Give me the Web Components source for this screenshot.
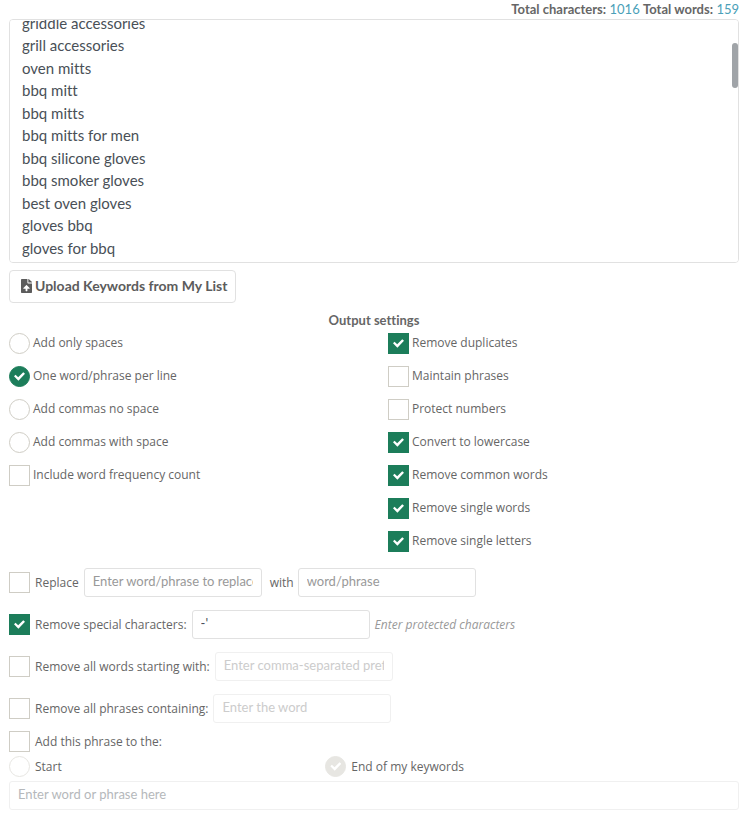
<!DOCTYPE html>
<html lang="en">
<head>
<meta charset="UTF-8">
<meta name="viewport" content="width=device-width, initial-scale=1">
<title>Keyword tool</title>
<style>
    body {
        margin: 0;
        padding: 0 11px 0 9px;
        background: #fff;
        color: #666;
        font: 12px/18px "Open Sans", sans-serif;
        font-variant-ligatures: none;
    }
</style>
</head>
<body>
<keyword-tool></keyword-tool>

<script>
// Styles shared by every tick box and radio
const tickStyle = `
    input[type="checkbox"], input[type="radio"] {
        appearance: none;
        flex: none;
        display: grid;
        place-content: center;
        box-sizing: border-box;
        width: 21px;
        height: 21px;
        margin: 0;
        border: 1px solid #cfcdc5;
        background: #fff;
    }

    input[type="radio"] {
        border-radius: 50%;
    }

    input:checked {
        border-color: #1c7d5a;
        background: #1c7d5a;
    }

    input:checked::before {
        content: "";
        width: 11px;
        height: 9px;
        background: #fff;
        clip-path: polygon(0 48%, 14% 30%, 38% 58%, 84% 4%, 100% 20%, 40% 96%);
    }

    input[type="radio"]:disabled {
        border-color: #e7e6e2;
    }

    input[type="radio"]:disabled:checked {
        background: #e7e6e2;
    }
`;

// Totals over the list
class TextTotals extends HTMLElement {
    constructor() {
        super();
        this.attachShadow({ mode: "open" });
        this.shadowRoot.innerHTML = `
            <style>
                :host {
                    display: block;
                    text-align: right;
                    font-family: Lato, sans-serif;
                    font-size: 13px;
                    line-height: 19px;
                }

                span {
                    color: #4a9fb8;
                }
            </style>
            <b>Total characters:</b> <span>${this.getAttribute("characters")}</span>
            <b>Total words:</b> <span>${this.getAttribute("words")}</span>
        `;
    }
}
customElements.define("text-totals", TextTotals);

// Scrolling list of keywords, with its own thumb over the right edge
class KeywordList extends HTMLElement {
    constructor() {
        super();
        this.attachShadow({ mode: "open" });

        this.keywords = [
            "griddle accessories",
            "grill accessories",
            "oven mitts",
            "bbq mitt",
            "bbq mitts",
            "bbq mitts for men",
            "bbq silicone gloves",
            "bbq smoker gloves",
            "best oven gloves",
            "gloves bbq",
            "gloves for bbq"
        ];

        this.shadowRoot.innerHTML = `
            <style>
                :host {
                    display: block;
                    position: relative;
                }

                textarea {
                    display: block;
                    box-sizing: border-box;
                    width: 100%;
                    height: 244px;
                    padding: 6px 12px;
                    border: 1px solid #e1e1e1;
                    border-radius: 4px;
                    outline: none;
                    resize: none;
                    color: #495057;
                    font: 15px/1.5 Lato, sans-serif;
                    font-variant-ligatures: none;
                    scrollbar-width: none;
                }

                .thumb {
                    position: absolute;
                    right: 1px;
                    width: 6px;
                    border-radius: 3px;
                    background: #a0a4a8;
                    pointer-events: none;
                }
            </style>
            <textarea aria-label="Keywords" spellcheck="false"></textarea>
            <div class="thumb"></div>
        `;
    }

    connectedCallback() {
        const area = this.shadowRoot.querySelector("textarea");
        area.addEventListener("scroll", () => this.moveThumb());
        area.value = "\n".repeat(5) + this.keywords.join("\n") + "\n".repeat(41);
        area.scrollTop = 127;
        this.moveThumb();
    }

    moveThumb() {
        const area = this.shadowRoot.querySelector("textarea");
        const thumb = this.shadowRoot.querySelector(".thumb");
        const ratio = area.clientHeight / area.scrollHeight;
        thumb.style.height = Math.round(area.clientHeight * ratio) + "px";
        thumb.style.top = Math.round(area.scrollTop * ratio) + "px";
    }
}
customElements.define("keyword-list", KeywordList);

class UploadButton extends HTMLElement {
    constructor() {
        super();
        this.attachShadow({ mode: "open" });
        this.shadowRoot.innerHTML = `
            <style>
                :host {
                    display: flex;
                }

                button {
                    display: flex;
                    align-items: center;
                    gap: 3px;
                    height: 33px;
                    padding: 0 8px 2px 11px;
                    border: 1px solid #e1e1e1;
                    border-radius: 4px;
                    background: #fff;
                    color: #5c5c5c;
                    font: bold 14px/21px Lato, sans-serif;
                    cursor: pointer;
                }

                button:hover {
                    background: #f7f7f7;
                }
            </style>
            <button type="button">
                <svg width="11" height="14" viewBox="0 0 384 512" preserveAspectRatio="none" fill="currentColor" aria-hidden="true">
                    <path d="M224 136V0H24C11 0 0 11 0 24v464c0 13 11 24 24 24h336c13 0 24-11 24-24V160H248c-13 0-24-11-24-24zm65 216h-65v80c0 9-7 16-16 16h-32c-9 0-16-7-16-16v-80H95c-14 0-21-17-11-27l96-96c7-7 17-7 24 0l96 96c10 10 3 27-11 27zM377 105L279 7c-5-5-11-7-17-7h-6v128h128v-6c0-6-3-13-7-17z"/>
                </svg>
                <slot></slot>
            </button>
        `;
    }
}
customElements.define("upload-button", UploadButton);

// Two columns of output options
class OutputSettings extends HTMLElement {
    constructor() {
        super();
        this.attachShadow({ mode: "open" });

        this.columns = [
            [
                { type: "radio", text: "Add only spaces" },
                { type: "radio", text: "One word/phrase per line", checked: true },
                { type: "radio", text: "Add commas no space" },
                { type: "radio", text: "Add commas with space" },
                { type: "checkbox", text: "Include word frequency count" }
            ],
            [
                { type: "checkbox", text: "Remove duplicates", checked: true },
                { type: "checkbox", text: "Maintain phrases" },
                { type: "checkbox", text: "Protect numbers" },
                { type: "checkbox", text: "Convert to lowercase", checked: true },
                { type: "checkbox", text: "Remove common words", checked: true },
                { type: "checkbox", text: "Remove single words", checked: true },
                { type: "checkbox", text: "Remove single letters", checked: true }
            ]
        ];

        this.render();
    }

    render() {
        this.shadowRoot.innerHTML = `
            <style>
                ${tickStyle}

                :host {
                    display: block;
                }

                h2 {
                    margin: 0 0 4px;
                    text-align: center;
                    font-family: Lato, sans-serif;
                    font-size: 13px;
                    line-height: 18px;
                }

                .columns {
                    display: grid;
                    grid-template-columns: 1fr 1fr;
                    gap: 28px;
                }

                .column {
                    display: flex;
                    flex-direction: column;
                    align-items: flex-start;
                    gap: 12px;
                }

                label {
                    display: flex;
                    gap: 3px;
                    line-height: 20px;
                }
            </style>
            <h2>Output settings</h2>
            <div class="columns"></div>
        `;

        const columns = this.shadowRoot.querySelector(".columns");
        this.columns.forEach((options) => {
            const div = document.createElement("div");
            div.className = "column";
            options.forEach((option) => {
                div.innerHTML += `<label><input type="${option.type}" name="${option.type}" ${option.checked ? "checked" : ""}>${option.text}</label>`;
            });
            columns.appendChild(div);
        });
    }
}
customElements.define("output-settings", OutputSettings);

// Tick box with its text; fields go in the "fields" slot
class FilterRow extends HTMLElement {
    constructor() {
        super();
        this.attachShadow({ mode: "open" });
        this.shadowRoot.innerHTML = `
            <style>
                ${tickStyle}

                :host {
                    display: flex;
                    align-items: center;
                    gap: 5px;
                }

                label {
                    display: flex;
                    align-items: center;
                    gap: 5px;
                }
            </style>
            <label><input type="checkbox" ${this.hasAttribute("checked") ? "checked" : ""}><slot></slot></label>
            <slot name="fields"></slot>
        `;
    }
}
customElements.define("filter-row", FilterRow);

class TextField extends HTMLElement {
    constructor() {
        super();
        this.attachShadow({ mode: "open" });
        this.shadowRoot.innerHTML = `
            <style>
                :host {
                    display: block;
                    width: 178px;
                }

                :host([wide]) {
                    width: auto;
                }

                input {
                    display: block;
                    box-sizing: border-box;
                    width: 100%;
                    height: 29px;
                    padding: 0 8px 3px;
                    border: 1px solid #e1e1e1;
                    border-radius: 3px;
                    outline: none;
                    background: #fff;
                    color: #495057;
                    font: 13px/20px Lato, sans-serif;
                }

                input::placeholder {
                    color: #999;
                }

                input:disabled {
                    border-color: #f0f0f0;
                }

                input:disabled::placeholder {
                    color: #ccc;
                }

                :host([wide]) input::placeholder {
                    color: #b5b8bb;
                }
            </style>
            <input type="text">
        `;

        const input = this.shadowRoot.querySelector("input");
        input.placeholder = this.getAttribute("placeholder") || "";
        input.value = this.getAttribute("value") || "";
        input.disabled = this.hasAttribute("disabled");
        input.setAttribute("aria-label", this.getAttribute("label") || input.placeholder);
    }
}
customElements.define("text-field", TextField);

// Where the added phrase goes
class PhrasePlace extends HTMLElement {
    constructor() {
        super();
        this.attachShadow({ mode: "open" });
        this.shadowRoot.innerHTML = `
            <style>
                ${tickStyle}

                :host {
                    display: grid;
                    grid-template-columns: 13fr 17fr;
                }

                label {
                    display: flex;
                    align-items: center;
                    gap: 5px;
                }
            </style>
            <label><input type="radio" name="place" disabled>Start</label>
            <label><input type="radio" name="place" disabled checked>End of my keywords</label>
        `;
    }
}
customElements.define("phrase-place", PhrasePlace);

// Whole page
class KeywordTool extends HTMLElement {
    constructor() {
        super();
        this.attachShadow({ mode: "open" });
        this.shadowRoot.innerHTML = `
            <style>
                :host {
                    display: block;
                }

                upload-button {
                    margin: 7px 0 8px;
                }

                .filters {
                    display: grid;
                    gap: 13px;
                    margin: 16px 0 8px;
                }

                .hint {
                    color: #999;
                    font-style: italic;
                }

                .joined {
                    display: flex;
                    align-items: center;
                    gap: 4px;
                    padding-left: 3px;
                }

                .place {
                    display: grid;
                    gap: 4px;
                }
            </style>

            <text-totals characters="1016" words="159"></text-totals>
            <keyword-list></keyword-list>
            <upload-button>Upload Keywords from My List</upload-button>
            <output-settings></output-settings>

            <div class="filters">
                <filter-row>
                    Replace
                    <text-field slot="fields" placeholder="Enter word/phrase to replace"></text-field>
                    <div slot="fields" class="joined">with <text-field placeholder="word/phrase"></text-field></div>
                </filter-row>
                <filter-row checked>
                    Remove special characters:
                    <text-field slot="fields" value="-'" label="Protected characters"></text-field>
                    <span slot="fields" class="hint">Enter protected characters</span>
                </filter-row>
                <filter-row>
                    Remove all words starting with:
                    <text-field slot="fields" placeholder="Enter comma-separated prefixes" disabled></text-field>
                </filter-row>
                <filter-row>
                    Remove all phrases containing:
                    <text-field slot="fields" placeholder="Enter the word" disabled></text-field>
                </filter-row>
            </div>

            <div class="place">
                <filter-row>Add this phrase to the:</filter-row>
                <phrase-place></phrase-place>
                <text-field wide placeholder="Enter word or phrase here" disabled></text-field>
            </div>
        `;
    }
}
customElements.define("keyword-tool", KeywordTool);
</script>
</body>
</html>
